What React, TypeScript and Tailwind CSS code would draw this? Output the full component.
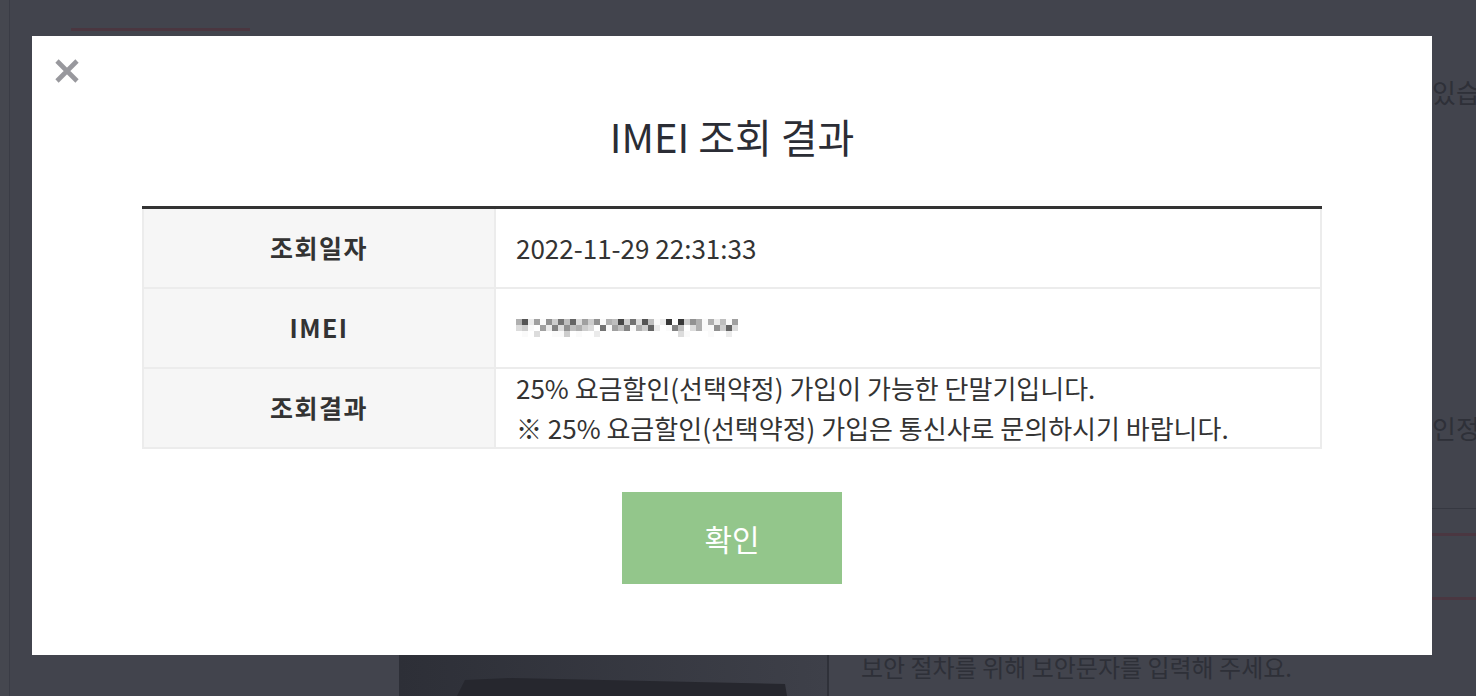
import React from "react";

const rows = [
  { label: "조회일자", value: ["2022-11-29 22:31:33"] },
  { label: "IMEI", value: null },
  {
    label: "조회결과",
    value: [
      "25% 요금할인(선택약정) 가입이 가능한 단말기입니다.",
      "※ 25% 요금할인(선택약정) 가입은 통신사로 문의하시기 바랍니다.",
    ],
  },
];

// pixelated (blurred out) IMEI number
const mosaic = [
  "93d8e7b5a4c8b7e9a2b5c3aed1f1b79e9dae81d",
  "cbef8d6c7a9bcf5e8a6e9b4dfe6afc9ee7b4c6a",
  "fefcffeebfeffdfffffffffffffcefffeffdfff",
];

const Mosaic: React.FC = () => (
  <svg width="222" height="24" viewBox="0 0 222 24" aria-hidden>
    {mosaic.map((row, y) =>
      row.split("").map((c, x) => {
        const v = Math.min(255, parseInt(c, 16) * 15 + 40);
        return (
          <rect
            key={`${x}-${y}`}
            x={x * 6}
            y={y * 6 + 3}
            width="6"
            height="6"
            fill={`rgb(${v},${v},${v})`}
          />
        );
      })
    )}
  </svg>
);

const App: React.FC = () => {
  return (
    <div className="relative h-[696px] w-full overflow-hidden bg-[#42444d] font-['Noto_Sans_CJK_KR','Noto_Sans',sans-serif]">
      {/* page behind the dimmed overlay */}
      <div className="flex h-full">
        <div className="w-[10px] shrink-0 border-r border-[#3a3c45] bg-[#45474f]" />
        <div className="flex min-w-0 flex-1 flex-col">
          <div className="pl-[61px] pt-[28px]">
            <div className="h-[3px] w-[179px] bg-[#4a3640]" />
          </div>
          <p className="mt-[43px] whitespace-nowrap pl-[1422px] text-[26px] leading-[36px] text-[#2e3038]">
            있습니다.
          </p>
          <p className="mt-[300px] whitespace-nowrap pl-[1422px] text-[26px] leading-[36px] text-[#2e3038]">
            인정서 발급
          </p>
          <div className="flex flex-1">
            <div className="w-[389px] shrink-0" />
            <div className="flex w-[428px] shrink-0 items-end bg-gradient-to-r from-[#2d2f37] to-[#3e4049]">
              <svg width="428" height="22" viewBox="0 0 428 22" aria-hidden>
                <path d="M58 22 L66 6 L112 4 L386 10 L388 22 Z" fill="#26272e" />
              </svg>
            </div>
            <div className="flex flex-1 flex-col border-l-2 border-[#2f3139]">
              <div className="mt-[62px] h-px bg-[#363841]" />
              <div className="mt-[24px] h-[3px] bg-[#4a3741]" />
              <div className="mt-[61px] h-[3px] bg-[#4a3741]" />
              <p className="mt-[50px] whitespace-nowrap pl-[32px] text-[24px] leading-[34px] text-[#2e3038]">
                보안 절차를 위해 보안문자를 입력해 주세요.
              </p>
            </div>
          </div>
        </div>
      </div>

      {/* modal */}
      <div className="absolute left-[32px] top-[36px] flex h-[619px] w-[1400px] flex-col items-center bg-white">
        <button className="absolute left-[22px] top-[22px] cursor-pointer">
          <svg width="26" height="26" viewBox="0 0 26 26">
            <path
              d="M3 3 L23 23 M23 3 L3 23"
              stroke="#98989d"
              strokeWidth="4.6"
            />
          </svg>
        </button>

        <h2 className="mt-[75px] text-[40px] leading-[51px] text-[#2b2d35]">
          IMEI 조회 결과
        </h2>

        <div className="mt-[44px] w-[1180px] border-t-[3px] border-[#333333]">
          {rows.map((r) => (
            <div
              key={r.label}
              className="flex h-[80px] border-x-2 border-b-2 border-[#ececec]"
            >
              <div className="flex w-[352px] shrink-0 items-center justify-center border-r-2 border-[#ececec] bg-[#f6f6f6] text-[25px] font-bold tracking-[1.5px] text-[#333333]">
                {r.label}
              </div>
              <div className="flex flex-col justify-center pl-[20px] text-[26px] leading-[40px] text-[#333333]">
                {r.value ? r.value.map((v) => <p key={v}>{v}</p>) : <Mosaic />}
              </div>
            </div>
          ))}
        </div>

        <button className="mt-[43px] h-[92px] w-[220px] bg-[#93c68b] text-[30px] text-white">
          확인
        </button>
      </div>
    </div>
  );
};

export default App;
